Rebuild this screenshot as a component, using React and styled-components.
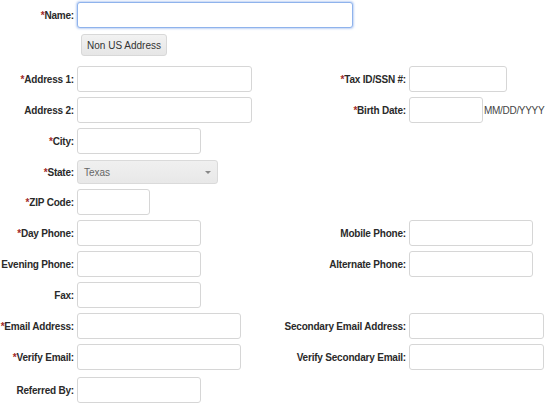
import styled, { createGlobalStyle } from 'styled-components'

const GlobalStyle = createGlobalStyle`
  body {
    margin: 0;
    padding: 2px 0 0;
    background: #fff;
    font-family: 'Liberation Sans', Arial, sans-serif;
  }
`

const Form = styled.form`
  display: flex;
  flex-direction: column;
  width: 550px;
`

const Row = styled.div`
  display: grid;
  grid-template-columns: 74px 174px 152px 1fr;
  column-gap: 3px;
  align-items: center;
  height: ${(p) => p.height || 26}px;
  margin-bottom: ${(p) => (p.gap === undefined ? 5 : p.gap)}px;
`

const Label = styled.label`
  display: flex;
  justify-content: flex-end;
  white-space: nowrap;
  font-size: 10px;
  font-weight: bold;
  color: #2a2a2a;
  letter-spacing: -0.2px;
  grid-column: ${(p) => p.col || 1};
`

const Star = styled.span`
  color: #a32a2a;
`

const Input = styled.input`
  box-sizing: border-box;
  height: 26px;
  width: ${(p) => p.w}px;
  padding: 0 5px;
  border: 1px solid #d6d6d6;
  border-radius: 3px;
  background: #fff;
  font-family: inherit;
  font-size: 11px;
  outline: none;
  grid-column: ${(p) => p.col || 2};

  &:focus {
    border-color: #8fb3ec;
    box-shadow: 0 0 2px 1px rgba(140, 175, 235, 0.55);
  }
`

const NameInput = styled(Input)`
  grid-column: 2 / 5;
  border-color: #8fb3ec;
  box-shadow: 0 0 2px 1px rgba(140, 175, 235, 0.55);
`

const Field = styled.div`
  display: flex;
  align-items: center;
  gap: 1px;
  grid-column: ${(p) => p.col || 2};
`

const Hint = styled.span`
  font-size: 10px;
  color: #444;
  letter-spacing: -0.3px;
`

const Button = styled.button`
  grid-column: 2 / 4;
  justify-self: start;
  margin-left: 4px;
  height: 22px;
  width: 86px;
  padding: 0;
  border: 1px solid #d8d8d8;
  border-radius: 3px;
  background: linear-gradient(#f2f2f2, #e6e6e6);
  font-family: inherit;
  font-size: 10px;
  color: #333;
`

const Select = styled.div`
  box-sizing: border-box;
  grid-column: 2;
  display: flex;
  align-items: center;
  justify-content: space-between;
  width: 141px;
  height: 24px;
  padding: 0 6px 0 6px;
  border: 1px solid #dadada;
  border-radius: 3px;
  background: linear-gradient(#f0f0f0, #e8e8e8);
  font-size: 10px;
  color: #666;
`

const Caret = styled.span`
  width: 0;
  height: 0;
  border-left: 3px solid transparent;
  border-right: 3px solid transparent;
  border-top: 3px solid #888;
`

const Req = ({ children }) => (
  <>
    <Star>*</Star>
    {children}
  </>
)

const App = () => (
  <>
    <GlobalStyle />
    <Form>
      <Row gap={6}>
        <Label><Req>Name:</Req></Label>
        <NameInput w={276} defaultValue='' autoFocus />
      </Row>
      <Row height={22} gap={10}>
        <Button type='button'>Non US Address</Button>
      </Row>
      <Row>
        <Label><Req>Address 1:</Req></Label>
        <Input w={175} />
        <Label col={3}><Req>Tax ID/SSN #:</Req></Label>
        <Input col={4} w={98} />
      </Row>
      <Row>
        <Label>Address 2:</Label>
        <Input w={175} />
        <Label col={3}><Req>Birth Date:</Req></Label>
        <Field col={4}>
          <Input w={74} />
          <Hint>MM/DD/YYYY</Hint>
        </Field>
      </Row>
      <Row gap={6}>
        <Label><Req>City:</Req></Label>
        <Input w={124} />
      </Row>
      <Row height={24} gap={5}>
        <Label><Req>State:</Req></Label>
        <Select>
          Texas
          <Caret />
        </Select>
      </Row>
      <Row>
        <Label><Req>ZIP Code:</Req></Label>
        <Input w={73} />
      </Row>
      <Row>
        <Label><Req>Day Phone:</Req></Label>
        <Input w={124} />
        <Label col={3}>Mobile Phone:</Label>
        <Input col={4} w={124} />
      </Row>
      <Row>
        <Label>Evening Phone:</Label>
        <Input w={124} />
        <Label col={3}>Alternate Phone:</Label>
        <Input col={4} w={124} />
      </Row>
      <Row>
        <Label>Fax:</Label>
        <Input w={124} />
      </Row>
      <Row>
        <Label><Req>Email Address:</Req></Label>
        <Input w={164} />
        <Label col={3}>Secondary Email Address:</Label>
        <Input col={4} w={135} />
      </Row>
      <Row gap={7}>
        <Label><Req>Verify Email:</Req></Label>
        <Input w={164} />
        <Label col={3}>Verify Secondary Email:</Label>
        <Input col={4} w={135} />
      </Row>
      <Row>
        <Label>Referred By:</Label>
        <Input w={124} />
      </Row>
    </Form>
  </>
)

export default App
